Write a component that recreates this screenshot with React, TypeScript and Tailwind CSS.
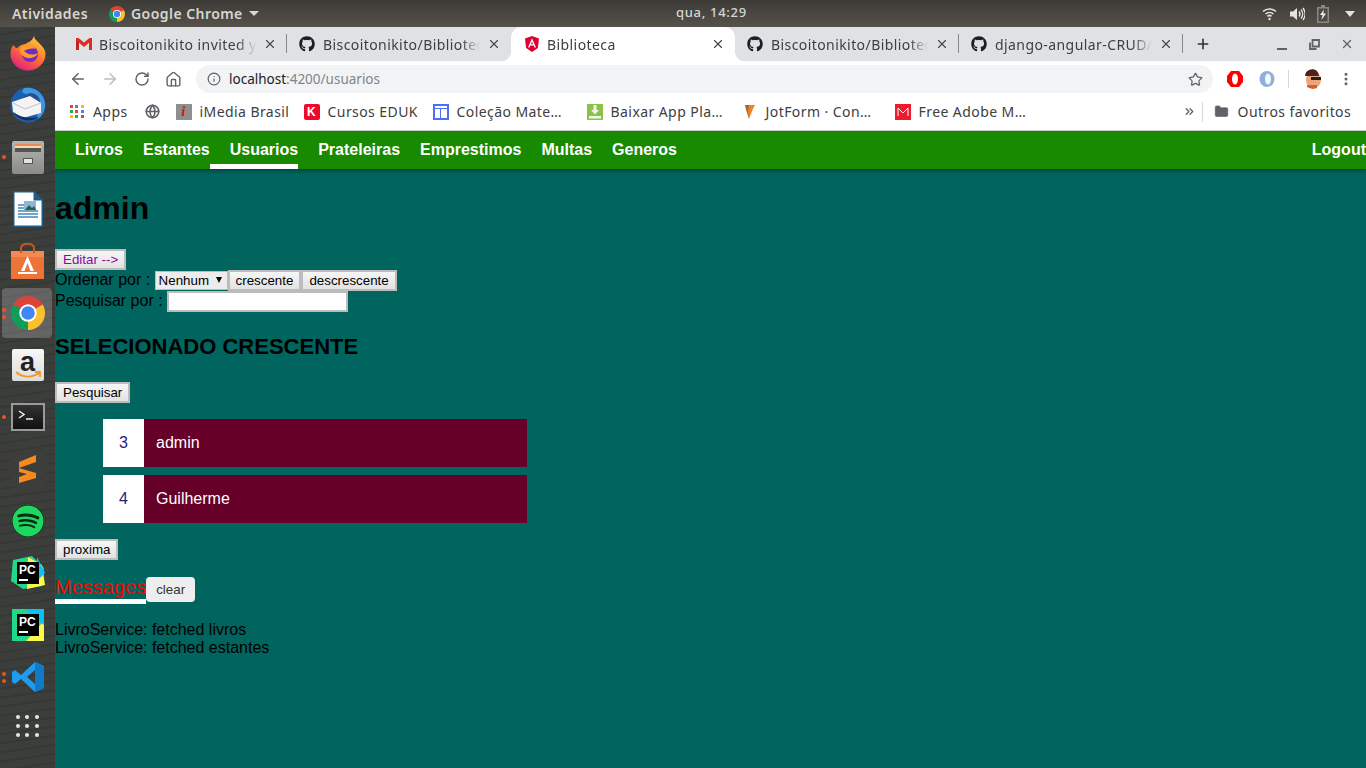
import { ArrowLeft, ArrowRight, RotateCw, Home, Info, Star, MoreVertical, X, Plus, Globe, Folder, ChevronsRight } from "lucide-react";
import { FaGithub, FaSpotify } from "react-icons/fa";

const Chrome = ({ s = 16 }: { s?: number }) => (
  <svg width={s} height={s} viewBox="3.5 3.5 41 41">
    <path d="M24 24 L6.25 13.75 A20.5 20.5 0 0 1 41.75 13.75 Z" fill="#db4437" />
    <path d="M24 24 L41.75 13.75 A20.5 20.5 0 0 1 24 44.5 Z" fill="#fbc02d" />
    <path d="M24 24 L24 44.5 A20.5 20.5 0 0 1 6.25 13.75 Z" fill="#0f9d58" />
    <circle cx="24" cy="24" r="10.5" fill="#fff" />
    <circle cx="24" cy="24" r="8.2" fill="#4285f4" />
  </svg>
);

const Gmail = () => (
  <svg width="16" height="12" viewBox="0 0 16 12">
    <path d="M0 0h2.6L8 4.6 13.4 0H16v12h-3V4.8L8 9 3 4.8V12H0z" fill="#d93025" />
    <path d="M3 12V4.8L0 2v10z" fill="#c5221f" />
  </svg>
);

const Angular = () => (
  <svg width="14" height="16" viewBox="0 0 14 16">
    <path d="M7 0 0 2.5 1.1 12 7 16l5.9-4L14 2.5z" fill="#dd0031" />
    <path d="M7 2.2 3 11.5h1.5l.8-2h3.4l.8 2H11zM6 8.2 7 5.6l1 2.6z" fill="#fff" />
  </svg>
);

type TabItem = { title: string; icon: "gmail" | "gh" | "ng"; active?: boolean; sep?: boolean };

const tabs: TabItem[] = [
  { title: "Biscoitonikito invited you to", icon: "gmail", sep: true },
  { title: "Biscoitonikito/Biblioteca", icon: "gh", sep: false },
  { title: "Biblioteca", icon: "ng", active: true },
  { title: "Biscoitonikito/Biblioteca", icon: "gh", sep: true },
  { title: "django-angular-CRUD/proj", icon: "gh", sep: true },
];

function Tab({ tab }: { tab: TabItem }) {
  return (
    <div
      className={
        tab.active
          ? "relative w-[224px] h-[34px] flex items-center pl-[13px] pr-[10px] bg-white rounded-t-[10px]"
          : "relative w-[224px] h-[34px] flex items-center pl-[13px] pr-[10px]"
      }
    >
      <span className="w-[16px] flex justify-center shrink-0">
        {tab.icon === "gmail" && <Gmail />}
        {tab.icon === "gh" && <FaGithub size={16} color="#1b1f23" className="-translate-x-[1px]" />}
        {tab.icon === "ng" && <Angular />}
      </span>
      <span className="ml-[7px] w-[158px] overflow-hidden whitespace-nowrap text-[14px] tracking-[0.42px] text-[#3c4043] [mask-image:linear-gradient(to_right,black_88%,transparent)]">
        {tab.title}
      </span>
      <X size={14} strokeWidth={2} className="ml-[7px] text-[#45474a] shrink-0" />
      {tab.sep && <span className="absolute right-0 top-[7px] w-px h-[19px] bg-[#85878b]" />}
      {tab.active && (
        <>
          <span className="absolute -left-[10px] bottom-0 w-[10px] h-[10px] bg-[radial-gradient(circle_at_0_0,transparent_10px,white_10.5px)]" />
          <span className="absolute -right-[10px] bottom-0 w-[10px] h-[10px] bg-[radial-gradient(circle_at_100%_0,transparent_10px,white_10.5px)]" />
        </>
      )}
    </div>
  );
}

const marks: { label: string; icon: React.ReactNode; w: string }[] = [
  {
    label: "iMedia Brasil",
    w: "w-[128px]",
    icon: (
      <span className="w-[16px] h-[16px] bg-[#8f8f8f] flex items-center justify-center text-[#e01010] font-bold italic text-[15px] leading-none font-['Liberation_Serif',serif]">
        i
      </span>
    ),
  },
  {
    label: "Cursos EDUK",
    w: "w-[129px]",
    icon: (
      <span className="w-[16px] h-[16px] rounded-[2px] bg-[#ee0a2a] flex items-center justify-center text-white font-bold text-[12px] leading-none font-['Liberation_Sans',sans-serif]">
        K
      </span>
    ),
  },
  {
    label: "Coleção Mate…",
    w: "w-[154px]",
    icon: (
      <span className="w-[16px] h-[16px] border-2 border-[#4d6ef5] flex flex-col">
        <span className="h-[3px] border-b border-[#4d6ef5]" />
        <span className="flex-1 w-[6px] border-r border-[#4d6ef5]" />
      </span>
    ),
  },
  {
    label: "Baixar App Pla…",
    w: "w-[155px]",
    icon: (
      <svg width="16" height="16" viewBox="0 0 16 16">
        <rect width="16" height="16" fill="#8bc34a" />
        <path d="M6.5 1h3v5H12L8 10.5 4 6h2.5zM2 12h12v2.5H2z" fill="#f3f7e8" />
      </svg>
    ),
  },
  {
    label: "JotForm · Con…",
    w: "w-[153px]",
    icon: (
      <svg width="12" height="16" viewBox="0 0 12 16">
        <path d="M1 1h10L8.5 6 5 15z" fill="#f58220" />
        <path d="M1 1h4L4 8l1 7-3-9z" fill="#555" opacity=".55" />
      </svg>
    ),
  },
  {
    label: "Free Adobe M…",
    w: "w-[150px]",
    icon: (
      <svg width="16" height="16" viewBox="0 0 16 16">
        <rect width="16" height="16" fill="#ec1c2e" />
        <path d="M3 4l5 5 5-5M3 4v8M13 4v8" fill="none" stroke="#fff" strokeWidth="1" />
      </svg>
    ),
  },
];

function DockSlot({ children, dots = 0, active }: { children: React.ReactNode; dots?: number; active?: boolean }) {
  return (
    <div className="relative h-[52px] w-[55px] flex items-center justify-center">
      {active && <span className="absolute left-[2px] top-[1px] w-[50px] h-[50px] rounded-[4px] bg-white/20" />}
      {dots > 0 && (
        <span className="absolute left-[2px] top-0 h-full flex flex-col justify-center gap-[3px]">
          {Array.from({ length: dots }).map((_, i) => (
            <span key={i} className="w-[4px] h-[4px] rounded-full bg-[#e95420]" />
          ))}
        </span>
      )}
      <span className="relative flex items-center justify-center">{children}</span>
    </div>
  );
}

const PyCharm = ({ edu }: { edu?: boolean }) => (
  <svg width="36" height="36" viewBox="0 0 36 36">
    {edu ? (
      <>
        <path d="M3 5 22 1l12 12-2 18-19 3L1 26z" fill="#21d789" />
        <path d="M18 2l14 8 3 20-18 4z" fill="#fcf84a" />
        <path d="M27 2l8 16-8 8z" fill="#07c3f2" />
      </>
    ) : (
      <>
        <rect x="2" y="2" width="32" height="32" fill="#21d789" />
        <path d="M16 34 34 14v20z" fill="#fcf84a" />
        <path d="M14 2h20v16z" fill="#07c3f2" />
      </>
    )}
    <rect x="7" y="7" width="22" height="22" fill="#000" />
    <text x="9" y="19" fontSize="12" fontWeight="700" fill="#fff" fontFamily="Liberation Sans, sans-serif">PC</text>
    <rect x="9" y="24" width="9" height="2" fill="#fff" />
  </svg>
);

function Dock() {
  return (
    <div className="w-[55px] shrink-0 bg-[repeating-linear-gradient(172deg,#3c3e3c_0px,#3c3e3c_6px,#343634_7px,#3c3e3c_9px)] flex flex-col h-[741px]">
      <DockSlot>
        <svg width="36" height="36" viewBox="0 0 36 36">
          <defs>
            <linearGradient id="ff" x1="0.8" y1="0" x2="0.2" y2="1">
              <stop offset="0" stopColor="#ffd23a" />
              <stop offset="0.45" stopColor="#ff7a2b" />
              <stop offset="1" stopColor="#e31587" />
            </linearGradient>
          </defs>
          <path d="M24 1c0 5 11 9 11.500 18 0 9-8 16.500-17.500 16.500S.5 28 .5 19c0-4 1-7 3-9 1 2 2 3 4 3 2-3 6-4 8-4 3-2 7-3 8.500-8z" fill="url(#ff)" />
          <circle cx="20" cy="19" r="8" fill="#6d2cc4" />
          <path d="M12 11c5-2 11-1 14 3-4-1-9 0-12 2 3 3 8 5 14 2-2 5-10 7-15 3-4-3-4-8-1-10z" fill="#ff9a2e" />
        </svg>
      </DockSlot>
      <DockSlot>
        <svg width="36" height="36" viewBox="0 0 36 36">
          <circle cx="18" cy="18" r="17.500" fill="#1c5fb0" />
          <path d="M14 1a17.500 17.500 0 0 1 21 17c0 6-3 11-7 14L24 12 12 5z" fill="#3d97e2" />
          <circle cx="21" cy="15" r="9" fill="#2a4f8f" />
          <path d="M2 15 20 9l11 7v10L13 31 3 25z" fill="#f4f4f4" />
          <path d="M3 16l12 6 16-6" fill="none" stroke="#b9c4cf" strokeWidth="1" />
          <path d="M3 25c6 9 18 11 26 5-9 2-18 1-26-5z" fill="#12305c" />
        </svg>
      </DockSlot>
      <DockSlot dots={1}>
        <div className="w-[32px] h-[33px] rounded-[2px] bg-gradient-to-b from-[#b5b5b3] to-[#8a8a88] flex flex-col items-center pt-[3px]">
          <div className="w-[26px] h-[8px] bg-[#57534e] border-t-2 border-[#e98b4c] flex flex-col">
            <span className="h-[2px] bg-[#f0d9c4]" />
          </div>
          <div className="w-[10px] h-[6px] mt-[6px] bg-[#e4e4e2] border border-[#555]" />
        </div>
      </DockSlot>
      <DockSlot>
        <svg width="30" height="36" viewBox="0 0 30 36">
          <path d="M0 0h21l9 9v27H0z" fill="#1c5c86" />
          <path d="M1.500 1.500h19v8h8v25h-27z" fill="#fff" />
          <path d="M21 0l9 9h-9z" fill="#1c5c86" />
          <path d="M11 10h12v10H11z" fill="#8fb6d8" />
          <path d="M12 19l4-5 3 3 2-2 2 4z" fill="#2b5f45" />
          <path d="M5 14h6M5 17h6M5 20h20M5 23h20M5 26h20" stroke="#6fa5c9" strokeWidth="2" />
        </svg>
      </DockSlot>
      <DockSlot>
        <svg width="33" height="36" viewBox="0 0 33 36">
          <path d="M0 8h33v28H0z" fill="#ed7336" />
          <path d="M0 8h33v6H0z" fill="#f08a52" />
          <path d="M10 10V5a6 4 0 0 1 13 0v5" fill="none" stroke="#c9551f" strokeWidth="2" />
          <path d="M16.500 13 10 28h3.500l3-8 3 8H23zM7 29h19v2H7z" fill="#fff" />
        </svg>
      </DockSlot>
      <DockSlot dots={2} active>
        <Chrome s={34} />
      </DockSlot>
      <DockSlot>
        <div className="w-[32px] h-[32px] rounded-[2px] bg-gradient-to-b from-[#f7f7f7] to-[#dcdcdc] flex flex-col items-center justify-center relative">
          <span className="text-[#222] font-bold text-[27px] leading-[24px] -mt-[6px] font-['Liberation_Sans',sans-serif]">a</span>
          <svg width="26" height="8" viewBox="0 0 26 8" className="absolute bottom-[2px]">
            <path d="M1 1c7 6 16 6 23 1M20 1h5v5" fill="none" stroke="#f29a1d" strokeWidth="1.800" />
          </svg>
        </div>
      </DockSlot>
      <DockSlot dots={1}>
        <div className="w-[34px] h-[28px] border-2 border-[#9a9a98] bg-gradient-to-b from-[#333] to-[#111] flex items-start pt-[5px] pl-[5px]">
          <svg width="20" height="12" viewBox="0 0 20 12">
            <path d="M1 1l5 3.500-5 3.500" fill="none" stroke="#eee" strokeWidth="1.500" />
            <path d="M8 9h7" stroke="#eee" strokeWidth="1.500" />
          </svg>
        </div>
      </DockSlot>
      <DockSlot>
        <div className="w-[36px] h-[36px] rounded-[4px] bg-[#3d3d3c] flex items-center justify-center">
          <svg width="19" height="28" viewBox="0 0 19 28">
            <path d="M18 0v7L1 13V7zM1 13l17 5v5L1 28v-6l8-3-8-2z" fill="#f58a1f" />
          </svg>
        </div>
      </DockSlot>
      <DockSlot>
        <FaSpotify size={32} color="#1ed760" className="bg-[#0a2a12] rounded-full" />
      </DockSlot>
      <DockSlot>
        <PyCharm edu />
      </DockSlot>
      <DockSlot>
        <PyCharm />
      </DockSlot>
      <DockSlot dots={2}>
        <svg width="32" height="32" viewBox="0 0 32 32">
          <path d="M23 1 32 5v22l-9 4L9 18l-6 5-3-2V11l3-2 6 5zM23 9l-8 7 8 7z" fill="#1f9cf0" />
          <path d="M23 1 32 5v22l-9 4z" fill="#0e7bc8" />
        </svg>
      </DockSlot>
      <div className="mt-[12px] ml-[16px] w-[23px] grid grid-cols-3 gap-[5px]">
        {Array.from({ length: 9 }).map((_, i) => (
          <span key={i} className="w-[4px] h-[4px] rounded-full bg-[#e6e6e6]" />
        ))}
      </div>
    </div>
  );
}

function TopBar() {
  return (
    <div className="h-[27px] bg-gradient-to-b from-[#3d3b37] to-[#55524b] flex items-center text-[#d8d6d0] text-[14px] font-semibold font-['Noto_Sans',sans-serif] relative">
      <span className="ml-[12px] tracking-[0.45px]">Atividades</span>
      <span className="ml-[21px]"><Chrome s={16} /></span>
      <span className="ml-[6px] tracking-[0.45px]">Google Chrome</span>
      <span className="ml-[6px] w-0 h-0 border-x-[5px] border-x-transparent border-t-[5px] border-t-[#d8d6d0]" />
      <span className="absolute left-[676px] top-[3px] font-medium text-[13px] tracking-[0.7px]">qua, 14:29</span>
      <span className="ml-auto flex items-center mr-[11px]">
        <svg width="15" height="14" viewBox="0 0 15 14" fill="none" stroke="#e4e2dc" strokeWidth="1.600">
          <path d="M1 4.500a9.500 9.500 0 0 1 13 0" />
          <path d="M3.500 7a6 6 0 0 1 8 0" />
          <path d="M5.500 9.300a3 3 0 0 1 4 0" />
          <circle cx="7.500" cy="12" r="1.200" fill="#e4e2dc" stroke="none" />
        </svg>
        <svg width="16" height="16" viewBox="0 0 16 16" className="ml-[12px]" fill="none" stroke="#e4e2dc" strokeWidth="1.400">
          <path d="M1 5.500h3L8 2v12L4 10.500H1z" fill="#e4e2dc" stroke="none" />
          <path d="M10 5.500a4 4 0 0 1 0 5" />
          <path d="M12 3.500a7 7 0 0 1 0 9" />
          <path d="M14 2a10 10 0 0 1 0 12" />
        </svg>
        <svg width="12" height="18" viewBox="0 0 12 18" className="ml-[12px]">
          <path d="M4 0h4v2h4v16H0V2h4z" fill="#8a8882" />
          <path d="M1.500 3.500h9v13h-9z" fill="#4c4a44" />
          <path d="M7 4.500 3 10h2.500L4.500 15 9 8.500H6.300z" fill="#eee" />
        </svg>
        <span className="ml-[16px] w-0 h-0 border-x-[5px] border-x-transparent border-t-[6px] border-t-[#e4e2dc]" />
      </span>
    </div>
  );
}

function Chromebar() {
  return (
    <div className="font-['Noto_Sans',sans-serif]">
      <div className="h-[34px] bg-[#dfe1e5] flex items-center pl-[8px]">
        {tabs.map((t, i) => (
          <Tab key={i} tab={t} />
        ))}
        <Plus size={16} strokeWidth={2.4} className="ml-[12px] text-[#2f3033]" />
        <span className="ml-[66px] mt-[10px] w-[10px] h-[2px] bg-[#5f6368]" />
        <svg width="11" height="11" viewBox="0 0 11 11" className="ml-[22px]" fill="none" stroke="#5f6368" strokeWidth="1.800">
          <path d="M3.500 1h6.500v6.500H3.500z" />
          <path d="M1 3.500V10h6.500" />
        </svg>
        <X size={14} strokeWidth={2.2} className="ml-[20px] text-[#5f6368]" />
      </div>
      <div className="h-[32px] bg-white flex items-end pl-[14px] pr-[14px]">
        <div className="h-[28px] flex items-center">
          <ArrowLeft size={18} strokeWidth={2} className="text-[#5f6368]" />
          <ArrowRight size={18} strokeWidth={2} className="ml-[14px] text-[#bcbfc3]" />
          <RotateCw size={16} strokeWidth={2.2} className="ml-[15px] text-[#5f6368]" />
          <Home size={17} strokeWidth={2} className="ml-[15px] text-[#5f6368]" />
          <div className="ml-[14px] w-[1017px] h-[28px] rounded-full bg-[#f1f3f4] flex items-center pl-[11px] pr-[10px] text-[13.5px]">
            <Info size={14} strokeWidth={2} className="text-[#5f6368]" />
            <span className="ml-[8px] text-[#202124]">localhost</span>
            <span className="text-[#80868b]">:4200/usuarios</span>
            <Star size={15} strokeWidth={2} className="ml-auto text-[#5f6368]" />
          </div>
          <svg width="18" height="18" viewBox="0 0 18 18" className="ml-[13px]">
            <path d="M5 1h8l4 5v6l-4 5H5l-4-5V6z" fill="#f00" />
            <ellipse cx="9" cy="9" rx="3" ry="5.500" fill="#fff" />
          </svg>
          <svg width="18" height="18" viewBox="0 0 18 18" className="ml-[14px]">
            <ellipse cx="9" cy="9" rx="7.500" ry="8" fill="#8fb0dc" />
            <ellipse cx="10" cy="9" rx="3" ry="5.500" fill="#f4f7fb" />
          </svg>
          <span className="ml-[12px] w-px h-[18px] bg-[#d5d7da]" />
          <span className="ml-[14px] w-[20px] h-[20px] rounded-full overflow-hidden relative">
            <span className="absolute left-[3px] top-[3px] w-[15px] h-[16px] rounded-full bg-[#eda47c]" />
            <span className="absolute left-[2px] top-0 w-[14px] h-[7px] rounded-t-full bg-[#4a2418]" />
            <span className="absolute left-[8px] top-[8px] w-[10px] h-[3px] bg-[#222]" />
            <span className="absolute left-[4px] bottom-0 w-[10px] h-[4px] bg-[#d9602a]" />
          </span>
          <MoreVertical size={16} strokeWidth={2.5} className="ml-[15px] text-[#5f6368]" />
        </div>
      </div>
      <div className="h-[37px] bg-white flex items-center pl-[15px] text-[14px] tracking-[0.42px] text-[#3c4043] whitespace-nowrap">
        <span className="w-[14px] grid grid-cols-3 gap-[2px]">
          {["#ea4335", "#4285f4", "#fbbc05", "#34a853", "#ea4335", "#4285f4", "#fbbc05", "#34a853", "#ea4335"].map((c, i) => (
            <span key={i} className="w-[3px] h-[3px]" style={{ backgroundColor: c }} />
          ))}
        </span>
        <span className="ml-[9px]">Apps</span>
        <Globe size={15} strokeWidth={2.6} className="ml-[17px] text-[#5f6368]" />
        <div className="ml-[16px] flex items-center">
          {marks.map((m) => (
            <div key={m.label} className={`flex items-center ${m.w}`}>
              <span className="w-[16px] flex justify-center shrink-0">{m.icon}</span>
              <span className="ml-[8px]">{m.label}</span>
            </div>
          ))}
        </div>
        <ChevronsRight size={13} strokeWidth={2.4} className="ml-[138px] text-[#5f6368]" />
        <span className="ml-[6px] w-px h-[20px] bg-[#d5d7da]" />
        <Folder size={15} fill="#5f6368" strokeWidth={1} className="ml-[11px] text-[#5f6368]" />
        <span className="ml-[9px]">Outros favoritos</span>
      </div>
      <div className="h-px bg-[#c8c9c9]" />
    </div>
  );
}

const navLinks = ["Livros", "Estantes", "Usuarios", "Prateleiras", "Emprestimos", "Multas", "Generos"];

const btn =
  "h-[21px] px-[6px] border-2 border-[#bcbcbc] text-[13.33px] leading-[15px] text-black bg-gradient-to-b from-[#f6f6f6] to-[#e2e2e2]";

function Page() {
  return (
    <div className="flex-1 bg-[#00655f] font-['Liberation_Sans',Arial,sans-serif] text-black text-[16px] overflow-hidden">
      <nav className="h-[38px] bg-[#178a00] pl-[20px] flex shadow-[0_2px_4px_rgba(0,0,0,0.35)] relative whitespace-nowrap">
        {navLinks.map((l, i) => (
          <a
            key={l}
            className={
              l === "Usuarios"
                ? "pl-[20px] border-b-[5px] border-white text-white font-bold leading-[38px] h-[38px]"
                : i === 0
                  ? "text-white font-bold leading-[38px]"
                  : "pl-[20px] text-white font-bold leading-[38px]"
            }
          >
            {l}
          </a>
        ))}
        <a className="ml-auto text-white font-bold leading-[38px]">Logout</a>
      </nav>
      <h1 className="mt-[21px] h-[37px] text-[32px] font-bold leading-[37px]">admin</h1>
      <button className={`mt-[22px] block ${btn} !text-[#8a0aa5]`}>Editar --&gt;</button>
      <div className="h-[21px] flex items-center">
        <span className="pb-[2px]">Ordenar por :&nbsp;</span>
        <span className="h-[19px] w-[73px] bg-[#ececec] border border-[#bcbcbc] text-[13.33px] flex items-center pl-[3px] relative">
          Nenhum
          <span className="absolute right-[5px] top-[5px] w-0 h-0 border-x-[3.5px] border-x-transparent border-t-[6px] border-t-black" />
        </span>
        <button className={btn}>crescente</button>
        <button className={btn}>descrescente</button>
      </div>
      <div className="h-[21px] flex items-center">
        <span className="pb-[2px]">Pesquisar por :&nbsp;</span>
        <input className="w-[181px] h-[21px] bg-white border-2 border-[#bcbcbc]" />
      </div>
      <h2 className="mt-[21px] h-[26px] text-[22px] font-bold leading-[27px]">SELECIONADO CRESCENTE</h2>
      <button className={`mt-[23px] block ${btn}`}>Pesquisar</button>
      <ul className="mt-[16px] ml-[48px] w-[424px] flex flex-col gap-[8px]">
        {[
          { id: 3, name: "admin" },
          { id: 4, name: "Guilherme" },
        ].map((u) => (
          <li key={u.id} className="h-[48px] bg-[#660029] flex items-center text-white">
            <span className="w-[41px] h-full bg-white text-[#2d1a7a] flex items-center justify-center">{u.id}</span>
            <span className="ml-[12px]">{u.name}</span>
          </li>
        ))}
      </ul>
      <button className={`mt-[16px] block ${btn}`}>proxima</button>
      <div className="mt-[17px] flex items-start">
        <span className="h-[22px] box-content border-b-[5px] border-white text-[20px] leading-[20px] text-[#f00]">Messages</span>
        <button className="h-[25px] w-[49px] rounded-[4px] bg-[#eee] text-[#333] text-[13.33px]">clear</button>
      </div>
      <div className="mt-[17px] leading-[18px]">
        <div>LivroService: fetched livros</div>
        <div>LivroService: fetched estantes</div>
      </div>
    </div>
  );
}

export default function App() {
  return (
    <div className="w-[1366px] h-[768px] overflow-hidden flex flex-col">
      <TopBar />
      <div className="flex flex-1 min-h-0">
        <Dock />
        <div className="flex-1 min-w-0 flex flex-col">
          <Chromebar />
          <Page />
        </div>
      </div>
    </div>
  );
}
